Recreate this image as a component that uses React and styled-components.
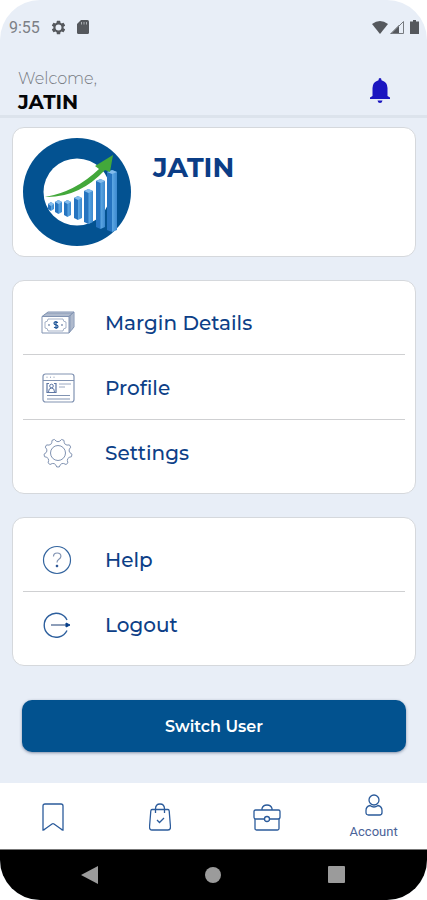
import React from "react";
import styled, { createGlobalStyle } from "styled-components";

const menuItems = [
  { label: "Margin Details", icon: "money" },
  { label: "Profile", icon: "profile" },
  { label: "Settings", icon: "settings" },
];

const supportItems = [
  { label: "Help", icon: "help" },
  { label: "Logout", icon: "logout" },
];

const bars = [
  { x: 25, top: 66, bottom: 71, w: 6 },
  { x: 32, top: 64, bottom: 74, w: 7 },
  { x: 41, top: 64, bottom: 77, w: 7 },
  { x: 51, top: 60, bottom: 80, w: 8 },
  { x: 61, top: 53, bottom: 84, w: 9 },
  { x: 73, top: 43, bottom: 89, w: 9 },
  { x: 84, top: 34, bottom: 92, w: 10 },
];

const gearPoints = () => {
  const teeth = 9;
  let d = "";
  for (let i = 0; i < teeth; i++) {
    const at = (offset, r) => {
      const a = ((i + offset) / teeth) * Math.PI * 2 + Math.PI / 2;
      return `${(16 + r * Math.cos(a)).toFixed(2)} ${(16 + r * Math.sin(a)).toFixed(2)}`;
    };
    d += `${i === 0 ? "M" : "L"}${at(-0.13, 14)} L${at(0.13, 14)} Q${at(0.5, 9)} ${at(0.87, 14)} `;
  }
  return d + "Z";
};

const icons = {
  money: (
    <svg viewBox="0 0 34 32" width="34" height="32">
      <path d="M1 9.5 7 5h26l-5 4.5Z" fill="#c3cbd9" />
      <path d="M28 9.5 33 5v15l-5 6Z" fill="#c3cbd9" />
      <path d="M1 9.5h27V26H1Z" fill="#fff" />
      <path d="M3 8h26.5v16M5 6.5h26v16" strokeWidth="0.6" />
      <path d="M7 12h15q0 3 3 3v6q-3 0-3 3H7q0-3-3-3v-6q3 0 3-3Z" strokeWidth="0.7" />
      <path
        d="M17 15.500q-4-1.500-4 .8 0 1.400 2 1.600t2 1.700q0 2.200-4 .7M15 14v8"
        stroke="#1f5597"
        strokeWidth="1.2"
      />
      <circle cx="8" cy="18" r="0.6" />
      <circle cx="21" cy="18" r="0.6" />
    </svg>
  ),
  profile: (
    <svg viewBox="0 0 34 32" width="34" height="32">
      <rect x="2" y="2" width="31" height="28" rx="2.5" strokeWidth="1.2" />
      <path d="M2 8.500h31M5.500 5.200h1M9 5.200h1M12.500 5.200h1" />
      <path d="M8 11.500H6v9h2M13 11.500h2v9h-2M8 20.500h5" stroke="#5f78a5" strokeWidth="1.2" />
      <circle cx="10.5" cy="14" r="1.8" stroke="#5f78a5" />
      <path d="M7.500 20q0-4 3-4t3 4" stroke="#5f78a5" />
      <path d="M18 12h12M18 15h6" strokeWidth="0.8" />
      <path d="M6 23.500h23M6 27h23" />
    </svg>
  ),
  settings: (
    <svg viewBox="0 0 32 32" width="32" height="32">
      <path d={gearPoints()} strokeLinejoin="round" />
      <circle cx="16" cy="16" r="7.5" />
    </svg>
  ),
  help: (
    <svg viewBox="0 0 32 32" width="32" height="32">
      <circle cx="15" cy="16" r="13.5" stroke="#34659f" strokeWidth="1.2" />
      <path d="M11.500 12.500q0-3.500 3.700-3.500t3.700 3.200q0 1.700-2 3T15 18.500" strokeWidth="1.2" />
      <circle cx="15" cy="22" r="0.9" fill="#1f4b8f" stroke="#1f4b8f" />
    </svg>
  ),
  logout: (
    <svg viewBox="0 0 32 32" width="32" height="32">
      <path d="M25 11a12 12 0 1 0 0 10.500" stroke="#2d5f9d" strokeWidth="1.4" />
      <path d="M9 16h16" strokeWidth="1.8" />
      <path d="M24 14 28 16l-4 2Z" fill="#063e89" stroke="#063e89" />
    </svg>
  ),
};

const Logo = () => (
  <svg viewBox="0 0 108 108" width="108" height="108" role="img" aria-label="Growth chart">
    <defs>
      <linearGradient id="bar">
        <stop offset="0" stopColor="#2674c0" />
        <stop offset="0.45" stopColor="#2674c0" />
        <stop offset="0.55" stopColor="#5aa5e2" />
        <stop offset="1" stopColor="#3c89cf" />
      </linearGradient>
    </defs>
    <circle cx="54" cy="54" r="54" fill="#035291" />
    <circle cx="54" cy="54" r="33.5" fill="#fff" />
    {bars.map(({ x, top, bottom, w }) => (
      <g key={x}>
        <path
          d={`M${x} ${top}l${w / 2} -2 ${w / 2} 2V${bottom}l-${w / 2} 2-${w / 2}-2Z`}
          fill="url(#bar)"
        />
        <path
          d={`M${x} ${top}l${w / 2} -2 ${w / 2} 2-${w / 2} 2Z`}
          fill="#83bced"
        />
      </g>
    ))}
    <path d="M22 59Q52 54 76 31l-4-3 18-11-3 17-5-2Q56 60 22 59Z" fill="#43a83b" />
  </svg>
);

const MenuCard = ({ items }) => {
  return (
    <Card as="nav">
      <MenuList>
        {items.map(({ label, icon }) => (
          <MenuRow key={label}>
            <MenuButton type="button">
              <MenuIcon>{icons[icon]}</MenuIcon>
              {label}
            </MenuButton>
          </MenuRow>
        ))}
      </MenuList>
    </Card>
  );
};

const App = () => {
  return (
    <>
      <GlobalStyle />
      <Screen>
        <StatusBar>
          <StatusGroup>
            <Time>9:55</Time>
            <svg viewBox="0 0 24 24" width="17" height="17" fill="#55585d">
              <path
                fillRule="evenodd"
                d="M19.140 12.940c.04-.3.060-.61.060-.94s-.02-.64-.07-.94l2.030-1.580a.49.49 0 0 0 .12-.61l-1.920-3.320a.49.49 0 0 0-.59-.22l-2.390.96a7 7 0 0 0-1.620-.94l-.36-2.540A.48.48 0 0 0 13.920 2.400h-3.840a.48.48 0 0 0-.47.410l-.36 2.540a7 7 0 0 0-1.620.94l-2.390-.96a.48.48 0 0 0-.59.22L2.740 8.870a.48.48 0 0 0 .12.610l2.030 1.580a6 6 0 0 0 0 1.880l-2.030 1.580a.49.49 0 0 0-.12.610l1.920 3.320c.12.22.37.29.59.22l2.390-.96c.5.38 1.030.7 1.620.94l.36 2.540c.05.24.24.41.47.41h3.840c.24 0 .44-.17.47-.41l.36-2.540a7 7 0 0 0 1.620-.94l2.390.96c.22.08.47 0 .59-.22l1.920-3.320a.48.48 0 0 0-.12-.61ZM12 16.200a4.200 4.200 0 1 1 0-8.400 4.200 4.200 0 0 1 0 8.400Z"
              />
            </svg>
            <svg viewBox="0 0 12 14" width="12" height="14">
              <path d="M4 0h6.500Q12 0 12 1.500v11q0 1.500-1.500 1.500h-9Q0 14 0 12.500V4Z" fill="#55585d" />
              <path d="M4.500 2v2.500M7 2v2.500M9.500 2v2.500" stroke="#a9adb2" />
            </svg>
          </StatusGroup>
          <SignalGroup>
            <svg viewBox="0 0 16 13" width="16" height="13">
              <path d="M0 3Q8-3 16 3L8 13Z" fill="#55585d" />
            </svg>
            <svg viewBox="0 0 14 14" width="14" height="14">
              <path d="M0 14 9 5v9Z" fill="#55585d" />
              <path d="M1.500 13.500 13.500 1.500v12Z" fill="none" stroke="#777b80" />
            </svg>
            <Battery viewBox="0 0 9 14" width="9" height="14">
              <path d="M3 0h3v1.500h3V14H0V1.500h3Z" fill="#55585d" />
            </Battery>
          </SignalGroup>
        </StatusBar>
        <Header>
          <div>
            <Welcome>Welcome,</Welcome>
            <HeaderName>JATIN</HeaderName>
          </div>
          <BellButton type="button" aria-label="Notifications">
            <svg viewBox="0 0 20 25" width="20" height="25" fill="#1b16c0">
              <path d="M10 0q1.500 0 1.500 2.200Q17.500 4 17.500 10v8l2.500 1.500V21H0v-1.500L2.500 18v-8q0-6 6-7.800Q8.500 0 10 0ZM7.500 22.500h5Q12 25 10 25t-2.500-2.500Z" />
            </svg>
          </BellButton>
        </Header>
        <Content>
          <Card>
            <UserRow>
              <Logo />
              <UserName>JATIN</UserName>
            </UserRow>
          </Card>
          <MenuCard items={menuItems} />
          <MenuCard items={supportItems} />
          <SwitchButton type="button">Switch User</SwitchButton>
        </Content>
        <TabBar>
          <Tab type="button" aria-label="Watchlist">
            <svg viewBox="0 0 22 28" width="22" height="28">
              <path d="M1 3q0-2 2-2h16q2 0 2 2v24q-1 0-2-1l-7-5q-1-.7-2 0l-7 5q-1 1-2 1Z" />
            </svg>
          </Tab>
          <Tab type="button" aria-label="Orders">
            <svg viewBox="0 0 22 28" width="22" height="28">
              <path d="M3 6.500h16q1 0 1.200 1.500L21.500 24q0 3-2.500 3H3Q.5 27 .5 24L1.800 8Q2 6.500 3 6.500Z" />
              <path d="M6.500 10V6q0-5 4.500-5t4.500 5v4M8 17l2.500 2.500L15 15" />
            </svg>
          </Tab>
          <Tab type="button" aria-label="Portfolio">
            <svg viewBox="0 0 28 28" width="28" height="28">
              <path d="M11.500 16H3q-2 0-2-2V8.500Q1 7 2.500 7h23q1.500 0 1.500 1.500V14q0 2-2 2h-8.500" />
              <path d="M2 16v9.500Q2 27 3.500 27h21q1.500 0 1.500-1.500V16" />
              <path d="M9 7V5.500Q10 2 14 2t5 3.500V7" />
              <circle cx="14" cy="16" r="2.5" />
            </svg>
          </Tab>
          <Tab type="button" aria-current="page">
            <svg viewBox="0 0 18 22" width="18" height="22">
              <circle cx="9" cy="6" r="5" />
              <path d="M5 11.500q4 3 8 0 4 1 4 5v2q0 2.500-2.500 2.500h-11Q1 21 1 18.500v-2q0-4 4-5Z" />
            </svg>
            <span>Account</span>
          </Tab>
        </TabBar>
        <SystemBar>
          <SystemButton type="button" aria-label="Back">
            <svg viewBox="0 0 18 18" width="18" height="18">
              <path d="M0 9 17 0v18Z" />
            </svg>
          </SystemButton>
          <SystemButton type="button" aria-label="Home">
            <svg viewBox="0 0 18 18" width="18" height="18">
              <circle cx="9" cy="9" r="8" />
            </svg>
          </SystemButton>
          <SystemButton type="button" aria-label="Recent apps">
            <svg viewBox="0 0 18 18" width="18" height="18">
              <rect width="17" height="17" rx="1" />
            </svg>
          </SystemButton>
        </SystemBar>
      </Screen>
    </>
  );
};

export default App;

const GlobalStyle = createGlobalStyle`
  * {
    box-sizing: border-box;
  }
  body {
    margin: 0;
    background: #ffffff;
    font-family: Montserrat, Inter, sans-serif;
  }
  button {
    padding: 0;
    border: 0;
    background: none;
    font-family: inherit;
    cursor: pointer;
  }
  svg {
    display: block;
    flex-shrink: 0;
  }
`;

const Screen = styled.div`
  display: flex;
  flex-direction: column;
  min-height: 100vh;
  overflow: hidden;
  border-radius: 40px;
  background: #e8eef7;
`;

const StatusBar = styled.div`
  display: flex;
  align-items: center;
  justify-content: space-between;
  height: 54px;
  padding: 0 8px 0 9px;
`;

const StatusGroup = styled.div`
  display: flex;
  align-items: center;
  gap: 10px;
`;

const SignalGroup = styled.div`
  display: flex;
  align-items: center;
  gap: 2px;
`;

const Battery = styled.svg`
  margin-left: 4px;
`;

const Time = styled.span`
  font-family: Roboto, sans-serif;
  font-size: 16px;
  color: #7c8086;
`;

const Header = styled.header`
  display: flex;
  align-items: center;
  justify-content: space-between;
  height: 64px;
  padding: 12px 37px 1px 18px;
  border-bottom: 3px solid #dce3ec;
`;

const Welcome = styled.div`
  font-size: 16px;
  font-weight: 300;
  line-height: 24px;
  color: #777b82;
`;

const HeaderName = styled.div`
  font-size: 20px;
  font-weight: 700;
  line-height: 22px;
  color: #050608;
`;

const BellButton = styled.button`
  display: flex;
`;

const Content = styled.main`
  display: flex;
  flex: 1;
  flex-direction: column;
  gap: 23px;
  padding: 9px 11px 31px 12px;
`;

const Card = styled.section`
  padding: 9px 10px;
  border: 1px solid #d5d8dc;
  border-radius: 12px;
  background: #ffffff;
`;

const UserRow = styled.div`
  display: flex;
  gap: 22px;
  padding: 1px 0;
`;

const UserName = styled.h1`
  margin: 13px 0 0;
  font-size: 27px;
  font-weight: 700;
  line-height: 34px;
  color: #0b3d86;
`;

const MenuList = styled.ul`
  margin: 0;
  padding: 0;
  list-style: none;
`;

const MenuRow = styled.li`
  & + & {
    border-top: 1px solid #cfd0d2;
  }
`;

const MenuButton = styled.button`
  display: flex;
  align-items: center;
  gap: 29px;
  width: 100%;
  height: 64px;
  padding: 2px 0 0 17px;
  font-size: 20px;
  font-weight: 500;
  color: #0d3f87;
`;

const MenuIcon = styled.span`
  display: flex;
  justify-content: center;
  width: 36px;
  svg {
    fill: none;
    stroke: #8193b2;
  }
`;

const SwitchButton = styled.button`
  height: 52px;
  margin: 11px 10px 0;
  border-radius: 10px;
  background: #02528f;
  box-shadow: 0 1px 3px rgba(30, 50, 90, 0.5);
  font-size: 16px;
  font-weight: 600;
  color: #ffffff;
`;

const TabBar = styled.nav`
  display: grid;
  grid-template-columns: repeat(4, 1fr);
  height: 66px;
  background: #ffffff;
`;

const Tab = styled.button`
  display: flex;
  flex-direction: column;
  align-items: center;
  justify-content: center;
  gap: 8px;
  padding-top: 1px;
  font-family: Roboto, sans-serif;
  font-size: 13px;
  line-height: 16px;
  color: #4a6298;
  svg {
    fill: none;
    stroke: #2b5b9b;
    stroke-width: 1.3;
  }
`;

const SystemBar = styled.div`
  display: flex;
  align-items: center;
  justify-content: space-around;
  height: 51px;
  padding: 0 28px;
  border-top: 1px solid #777777;
  background: #000000;
`;

const SystemButton = styled.button`
  svg {
    fill: #9b9b9b;
  }
`;
